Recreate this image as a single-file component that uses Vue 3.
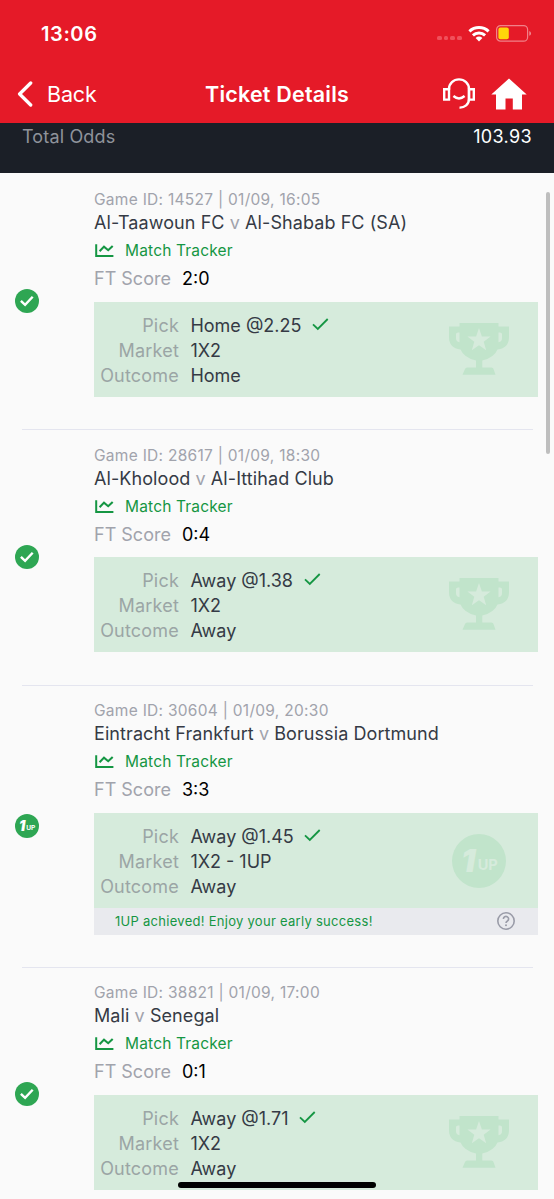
<script setup>
const games = [
  { id: '14527', date: '01/09, 16:05', home: 'Al-Taawoun FC', away: 'Al-Shabab FC (SA)', score: '2:0', pick: 'Home @2.25', market: '1X2', outcome: 'Home' },
  { id: '28617', date: '01/09, 18:30', home: 'Al-Kholood', away: 'Al-Ittihad Club', score: '0:4', pick: 'Away @1.38', market: '1X2', outcome: 'Away' },
  { id: '30604', date: '01/09, 20:30', home: 'Eintracht Frankfurt', away: 'Borussia Dortmund', score: '3:3', pick: 'Away @1.45', market: '1X2 - 1UP', outcome: 'Away', oneUp: true },
  { id: '38821', date: '01/09, 17:00', home: 'Mali', away: 'Senegal', score: '0:1', pick: 'Away @1.71', market: '1X2', outcome: 'Away' },
]
</script>

<template>
  <div class="screen">
    <header class="header">
      <div class="status">
        <span class="time">13:06</span>
        <div class="status-icons">
          <i class="dots"><b v-for="n in 4" :key="n"></b></i>
          <svg class="wifi" width="22" height="17" viewBox="0 0 22 17">
            <g fill="none" stroke="#fff" stroke-width="3">
              <path d="M1.4 6.3 A14 14 0 0 1 20.6 6.3" />
              <path d="M4.9 10.3 A9 9 0 0 1 17.1 10.3" />
            </g>
            <path fill="#fff" d="M7.6 12.9 A5.2 5.2 0 0 1 14.4 12.9 L11 16.5 Z" />
          </svg>
          <svg class="battery" width="36" height="17" viewBox="0 0 36 17">
            <rect x="0.6" y="0.6" width="31" height="15.6" rx="4" fill="none" stroke="#fff" stroke-opacity=".45" stroke-width="1.2" />
            <rect x="2.4" y="2.5" width="10.4" height="11.8" rx="2" fill="#ffd60a" />
            <path d="M33.3 6 Q35 6.6 35 8.4 T33.3 10.8 Z" fill="#fff" fill-opacity=".5" />
          </svg>
        </div>
      </div>
      <nav class="nav">
        <div class="back">
          <svg width="16" height="26" viewBox="0 0 16 26"><path d="M13.7 2 L2.6 13 L13.7 24" fill="none" stroke="#fff" stroke-width="3.3" stroke-linecap="round" stroke-linejoin="round" /></svg>
          <span>Back</span>
        </div>
        <h1>Ticket Details</h1>
        <div class="actions">
          <svg width="34" height="32" viewBox="0 0 34 32">
            <g fill="none" stroke="#fff" stroke-width="2.4">
              <path d="M7 11.2 H2.2 V21.6 H7 Z M27 11.2 H31.8 V21.6 H27 Z" />
              <path d="M7 12 V11 A10 9.6 0 0 1 27 11 V21 C27 26.5 22.5 29.8 17.5 29.6" />
              <path d="M11.4 18 Q17 22.8 22.6 18" />
            </g>
          </svg>
          <svg width="36" height="32" viewBox="0 0 36 32"><path fill="#fff" d="M18 0.5 L35.7 16.4 H31 V31.5 H21.8 V20.4 H14.5 V31.5 H5 V16.4 H.3 Z" /></svg>
        </div>
      </nav>
    </header>
    <section class="total"><span>Total Odds</span><strong>103.93</strong></section>
    <main class="list">
      <article v-for="g in games" :key="g.id" class="game">
        <div class="state">
          <svg v-if="!g.oneUp" width="24" height="24" viewBox="0 0 24 24"><circle cx="12" cy="12" r="12" fill="#2ea653" /><path d="M5.9 11.8 L10.1 15.9 L17.7 7.8" fill="none" stroke="#fff" stroke-width="2.4" /></svg>
          <svg v-else width="24" height="24" viewBox="0 0 24 24">
            <circle cx="12" cy="12" r="12" fill="#2ea653" />
            <text class="one" x="4" y="16.8" font-size="14">1</text><text class="up" x="11.3" y="15.8" font-size="6.6">UP</text>
          </svg>
        </div>
        <div class="body">
          <p class="meta">Game ID: {{ g.id }} | {{ g.date }}</p>
          <p class="teams">{{ g.home }} <span>v</span> {{ g.away }}</p>
          <p class="tracker">
            <svg width="19" height="13" viewBox="0 0 19 13"><g fill="none" stroke="#159643"><path stroke-width="2" d="M1.2 .2 V12 H18.4" /><path stroke-width="2.1" d="M4.6 7.2 L9 2.6 L13.2 6.2 L17.7 1.9" /></g></svg>
            <span>Match Tracker</span>
          </p>
          <p class="score">FT Score <b>{{ g.score }}</b></p>
          <div class="result">
            <dl>
              <dt>Pick</dt>
              <dd>{{ g.pick }}<svg width="17" height="13" viewBox="0 0 17 13"><path d="M1 6.3 L5.8 11 L15.7 1" fill="none" stroke="#159643" stroke-width="1.8" /></svg></dd>
              <dt>Market</dt><dd>{{ g.market }}</dd>
              <dt>Outcome</dt><dd>{{ g.outcome }}</dd>
            </dl>
            <svg v-if="!g.oneUp" class="trophy" width="60" height="52" viewBox="0 0 60 52">
              <path fill="#c1e4cb" fill-rule="evenodd" d="M10.5 0 H49.5 V3.5 H60 V14 Q60 25 48.5 26.5 Q45 34.8 33.3 37.5 V44.5 H42.5 Q44 44.5 44.5 46 L46.5 51.7 H13.5 L16 46 Q16.5 44.5 18 44.5 H27 V37.5 Q15 34.8 11.5 26.5 Q0 25 0 14 V3.5 H10.5 Z M10.5 9.5 Q7 9 7 11 V15 Q7 19 10.5 19.2 Z M49.5 9.5 V19.2 Q53 19 53 15 V11 Q53 9 49.5 9.5 Z M30 5 L32.9 13.4 L41.6 13.5 L34.7 18.8 L37.2 27.3 L30 22.3 L22.8 27.3 L25.3 18.8 L18.4 13.5 L27.1 13.4 Z" />
            </svg>
            <svg v-else class="badge" width="54" height="54" viewBox="0 0 54 54">
              <circle cx="27" cy="27" r="27" fill="#c1e4cb" />
              <text class="one pale" x="9" y="37.8" font-size="32">1</text><text class="up pale" x="25.7" y="35.8" font-size="14.6">UP</text>
            </svg>
          </div>
          <div v-if="g.oneUp" class="note">
            <span>1UP achieved! Enjoy your early success!</span>
            <svg width="18" height="18" viewBox="0 0 18 18"><g fill="none" stroke="#9a9ca8" stroke-width="1.6"><circle cx="9" cy="9" r="8.2" /><path d="M6.4 7 A2.6 2.5 0 1 1 10.4 9 Q9 9.8 9 11.1" /></g><circle cx="9" cy="13.2" r="1" fill="#9a9ca8" /></svg>
          </div>
        </div>
      </article>
    </main>
    <i class="scrollbar"></i>
    <i class="home-bar"></i>
  </div>
</template>

<style>
body { background: #fafafa; overflow: hidden; }
</style>

<style scoped>
* { box-sizing: border-box; margin: 0; }
.screen { position: relative; width: 554px; height: 1199px; overflow: hidden; background: #fafafa; font-family: Inter, "Liberation Sans", sans-serif; color: #353a45; }
.header { height: 123px; background: #e51a28; color: #fff; }
.status { height: 66px; display: flex; justify-content: space-between; align-items: center; padding: 0 22px 0 41px; }
.time { font-size: 20px; font-weight: 600; letter-spacing: .6px; padding-top: 1px; }
.status-icons { display: flex; align-items: center; }
.dots { display: flex; gap: 2px; margin: 10px 6px 0 0; }
.dots b { width: 4.8px; height: 4.8px; border-radius: 1.5px; background: #f0505b; }
.wifi { margin-right: 6px; }
.nav { height: 55px; display: grid; grid-template-columns: 1fr auto 1fr; align-items: center; padding: 0 27px; }
.back { display: flex; align-items: center; gap: 14px; margin-left: -10px; font-size: 21.5px; letter-spacing: -.15px; }
.nav h1 { font-size: 21.5px; font-weight: 600; letter-spacing: .2px; }
.actions { display: flex; gap: 15px; justify-content: flex-end; }
.total { height: 50px; background: #1b1f27; display: flex; justify-content: space-between; padding: 1.5px 22px 0; line-height: 24px; font-size: 18px; letter-spacing: .15px; color: #8f939b; }
.total strong { font-weight: 400; letter-spacing: .35px; color: #fff; }
.list { padding-top: .8px; }
.game { display: flex; align-items: center; height: 255.4px; position: relative; }
.game:has(.note) { height: 282.3px; }
.game::after { content: ""; position: absolute; left: 22px; right: 21px; bottom: -.95px; height: 1px; background: #e4e5ef; }
.state { width: 94px; padding-left: 14.6px; margin-top: -.2px; }
.state svg { display: block; }
.body { width: 444px; align-self: flex-start; padding-top: 15.6px; }
.meta { height: 21px; line-height: 21px; font-size: 15.5px; letter-spacing: .28px; color: #a1a3ac; white-space: nowrap; }
.teams { height: 26px; line-height: 26px; font-size: 18px; letter-spacing: .08px; white-space: nowrap; }
.teams span { color: #a1a3ac; }
.tracker { height: 29px; display: flex; align-items: center; gap: 11px; font-size: 15.5px; letter-spacing: .17px; color: #159643; }
.tracker svg { margin-left: 1px; }
.score { height: 36.4px; line-height: 28px; font-size: 18px; color: #a1a3ac; }
.score b { margin-left: 6px; font-weight: 400; color: #000; }
.result { height: 95px; background: #d6ebdc; display: flex; justify-content: space-between; padding: 11.3px 29px 0 0; }
dl { display: grid; grid-template-columns: 85px auto; grid-auto-rows: 24.9px; align-content: start; column-gap: 11.4px; line-height: 25px; font-size: 18px; white-space: nowrap; }
dt { text-align: right; letter-spacing: .2px; color: #9ba5a5; }
dd svg { margin-left: 10.5px; vertical-align: 1px; }
.trophy { margin-top: 9.7px; }
.badge { margin: 9.7px 3px 0 0; }
.one { fill: #fff; font-family: Inter, sans-serif; font-weight: 900; font-style: italic; }
.up { fill: #fff; font-family: Inter, sans-serif; font-weight: 700; }
.pale { fill: #d6ebdc; }
.note { height: 27px; background: #e9eaee; display: flex; align-items: center; justify-content: space-between; padding: 0 23px 0 21px; font-size: 13px; letter-spacing: .28px; color: #159643; }
.scrollbar { position: absolute; left: 546px; top: 192px; width: 4px; height: 262px; border-radius: 2px; background: #bebebe; }
.home-bar { position: absolute; left: 178px; top: 1182px; width: 198px; height: 6px; border-radius: 3px; background: #000; }
</style>
